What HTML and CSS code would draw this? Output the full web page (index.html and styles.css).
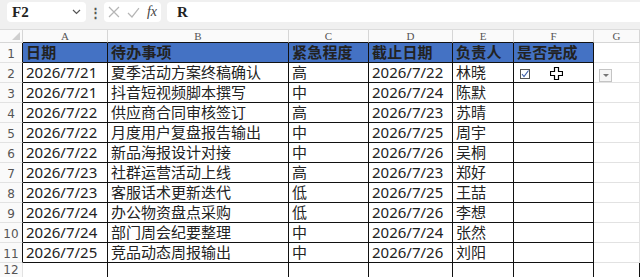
FILE: index.html
```html
<!DOCTYPE html>
<html lang="zh-CN">
<head>
  <meta charset="UTF-8">
  <meta name="viewport" content="width=device-width, initial-scale=1.0">
  <title>待办事项</title>
  <link rel="stylesheet" href="styles.css">
</head>
<body>
  <header class="topbar">
    <div class="namebox">
      <span class="cellref">F2</span>
      <svg class="chevron" width="9" height="6" viewBox="0 0 9 6"><path d="M1 1l3.5 3.5L8 1" fill="none" stroke="#555" stroke-width="1.2"/></svg>
    </div>
    <div class="dots">&#8942;</div>
    <div class="fnbtns">
      <svg width="12" height="12" viewBox="0 0 12 12"><path d="M1 1l10 10M11 1L1 11" stroke="#b5b5b5" stroke-width="1.2"/></svg>
      <svg width="13" height="11" viewBox="0 0 13 11"><path d="M1 6l4 4 7-9" fill="none" stroke="#b5b5b5" stroke-width="1.2"/></svg>
      <span class="fx">fx</span>
    </div>
    <div class="formula">R</div>
  </header>

  <table class="sheet">
    <colgroup>
      <col class="c-row">
      <col class="c-a">
      <col class="c-b">
      <col class="c-c">
      <col class="c-d">
      <col class="c-e">
      <col class="c-f">
      <col>
    </colgroup>
    <thead>
      <tr class="letters">
        <th class="corner"><span class="tri"></span></th>
        <th class="top">A</th><th class="top">B</th><th class="top">C</th>
        <th class="top">D</th><th class="top">E</th><th class="top">F</th>
        <th>G</th>
      </tr>
    </thead>
    <tbody>
      <tr class="head">
        <th class="num">1</th>
        <td>日期</td><td>待办事项</td><td>紧急程度</td><td>截止日期</td><td>负责人</td><td>是否完成</td>
        <td class="out"></td>
      </tr>
      <tr>
        <th class="num">2</th>
        <td>2026/7/21</td><td>夏季活动方案终稿确认</td><td>高</td><td>2026/7/22</td><td>林晓</td>
        <td class="done">
          <svg width="10" height="10" viewBox="0 0 10 10"><rect x="0.5" y="0.5" width="9" height="9" fill="#fff" stroke="#555"/><path d="M2 5l2 2.5L8.5 1.5" fill="none" stroke="#3b5ea8" stroke-width="1.1"/></svg>
          <svg class="cursor" width="13" height="13" viewBox="0 0 13 13"><path d="M4.5 0.5h4v4h4v4h-4v4h-4v-4h-4v-4h4z" fill="#fff" stroke="#000" stroke-width="1.2"/></svg>
        </td>
        <td class="out"><span class="drop"></span></td>
      </tr>
      <tr><th class="num">3</th><td>2026/7/21</td><td>抖音短视频脚本撰写</td><td>中</td><td>2026/7/24</td><td>陈默</td><td></td><td class="out"></td></tr>
      <tr><th class="num">4</th><td>2026/7/22</td><td>供应商合同审核签订</td><td>高</td><td>2026/7/23</td><td>苏晴</td><td></td><td class="out"></td></tr>
      <tr><th class="num">5</th><td>2026/7/22</td><td>月度用户复盘报告输出</td><td>中</td><td>2026/7/25</td><td>周宇</td><td></td><td class="out"></td></tr>
      <tr><th class="num">6</th><td>2026/7/22</td><td>新品海报设计对接</td><td>中</td><td>2026/7/26</td><td>吴桐</td><td></td><td class="out"></td></tr>
      <tr><th class="num">7</th><td>2026/7/23</td><td>社群运营活动上线</td><td>高</td><td>2026/7/23</td><td>郑好</td><td></td><td class="out"></td></tr>
      <tr><th class="num">8</th><td>2026/7/23</td><td>客服话术更新迭代</td><td>低</td><td>2026/7/25</td><td>王喆</td><td></td><td class="out"></td></tr>
      <tr><th class="num">9</th><td>2026/7/24</td><td>办公物资盘点采购</td><td>低</td><td>2026/7/26</td><td>李想</td><td></td><td class="out"></td></tr>
      <tr><th class="num">10</th><td>2026/7/24</td><td>部门周会纪要整理</td><td>中</td><td>2026/7/24</td><td>张然</td><td></td><td class="out"></td></tr>
      <tr><th class="num">11</th><td>2026/7/25</td><td>竞品动态周报输出</td><td>中</td><td>2026/7/26</td><td>刘阳</td><td></td><td class="out"></td></tr>
      <tr class="empty"><th class="num">12</th><td></td><td></td><td></td><td></td><td></td><td></td><td></td></tr>
    </tbody>
  </table>
</body>
</html>
```

FILE: styles.css
```css
body {
  margin: 0;
  width: 640px;
  height: 277px;
  overflow: hidden;
  background: #fff;
  font-family: "Noto Sans", "Noto Sans CJK SC", sans-serif;
}

/* formula bar */

.topbar {
  display: flex;
  align-items: flex-start;
  height: 30px;
  padding: 2px 0 0 7px;
  box-sizing: border-box;
  background: #f0f0f0;
  border-bottom: 1px solid #dcdcdc;
}

.namebox {
  display: flex;
  align-items: center;
  justify-content: space-between;
  width: 79px;
  height: 20px;
  padding: 0 5px;
  box-sizing: border-box;
  background: #fff;
  border-radius: 4px;
}

.cellref,
.formula {
  font-family: "Liberation Serif", serif;
  font-weight: bold;
  font-size: 15px;
  color: #222;
}

.dots {
  width: 18px;
  height: 20px;
  line-height: 20px;
  text-align: center;
  font-size: 13px;
  font-weight: bold;
  color: #555;
}

.fnbtns {
  display: flex;
  align-items: center;
  gap: 7px;
  width: 57px;
  height: 20px;
  padding: 0 4px;
  box-sizing: border-box;
  background: #fff;
  border-radius: 4px;
}

.fx {
  font-family: "Liberation Serif", serif;
  font-style: italic;
  font-size: 14px;
  color: #444;
}

.formula {
  flex: 1;
  height: 20px;
  line-height: 20px;
  margin-left: 6px;
  padding-left: 10px;
  background: #fff;
  border-radius: 4px 0 0 4px;
}

/* grid */

.sheet {
  width: 640px;
  table-layout: fixed;
  border-collapse: separate;
  border-spacing: 0;
}

.c-row { width: 23px; }
.c-a { width: 85px; }
.c-b { width: 181px; }
.c-c { width: 80px; }
.c-d { width: 84px; }
.c-e { width: 61px; }
.c-f { width: 80px; }

.sheet th,
.sheet td {
  padding: 0;
  white-space: nowrap;
  overflow: hidden;
  border-right: 1px solid #e2e2e2;
  border-bottom: 1px solid #e2e2e2;
}

.letters th {
  height: 12px;
  line-height: 12px;
  font-family: "Liberation Serif", serif;
  font-weight: normal;
  font-size: 11px;
  color: #555;
  background: #fafafa;
  border-right-color: #d6d6d6;
  border-bottom-color: #d6d6d6;
}

.letters th.top {
  border-bottom-color: #111;
}

.corner {
  position: relative;
}

.tri {
  position: absolute;
  right: 2px;
  bottom: 2px;
  border-left: 8px solid transparent;
  border-bottom: 8px solid #cfcfcf;
}

.sheet tbody td {
  height: 19px;
  line-height: 19px;
  padding-left: 3px;
  font-size: 15px;
  color: #222;
  border-right-color: #111;
  border-bottom-color: #111;
}

.sheet tbody td.out,
.empty td {
  border-right-color: #e2e2e2;
  border-bottom-color: #e2e2e2;
}

.num {
  font-family: "DejaVu Sans", sans-serif;
  font-weight: normal;
  font-size: 12px;
  color: #555;
  background: #fafafa;
  padding-top: 2px !important;
  border-right-color: #111 !important;
}

.empty .num {
  border-right-color: #e2e2e2 !important;
  vertical-align: top;
  padding-top: 0 !important;
}

.head td {
  font-weight: bold;
  color: #111;
  background: #4472c4;
  letter-spacing: 0.2px;
}

.head td.out {
  background: #fff;
}

.done svg {
  vertical-align: -1px;
  margin-left: 3px;
}

.done .cursor {
  margin-left: 16px;
  vertical-align: -2px;
}

.drop {
  display: inline-block;
  width: 11px;
  height: 11px;
  margin-left: 2px;
  vertical-align: -4px;
  border: 1px solid #c4c4c4;
  background: #f6f6f6;
  position: relative;
}

.drop::after {
  content: "";
  position: absolute;
  left: 3px;
  top: 4px;
  border-left: 3px solid transparent;
  border-right: 3px solid transparent;
  border-top: 3px solid #777;
}
```
